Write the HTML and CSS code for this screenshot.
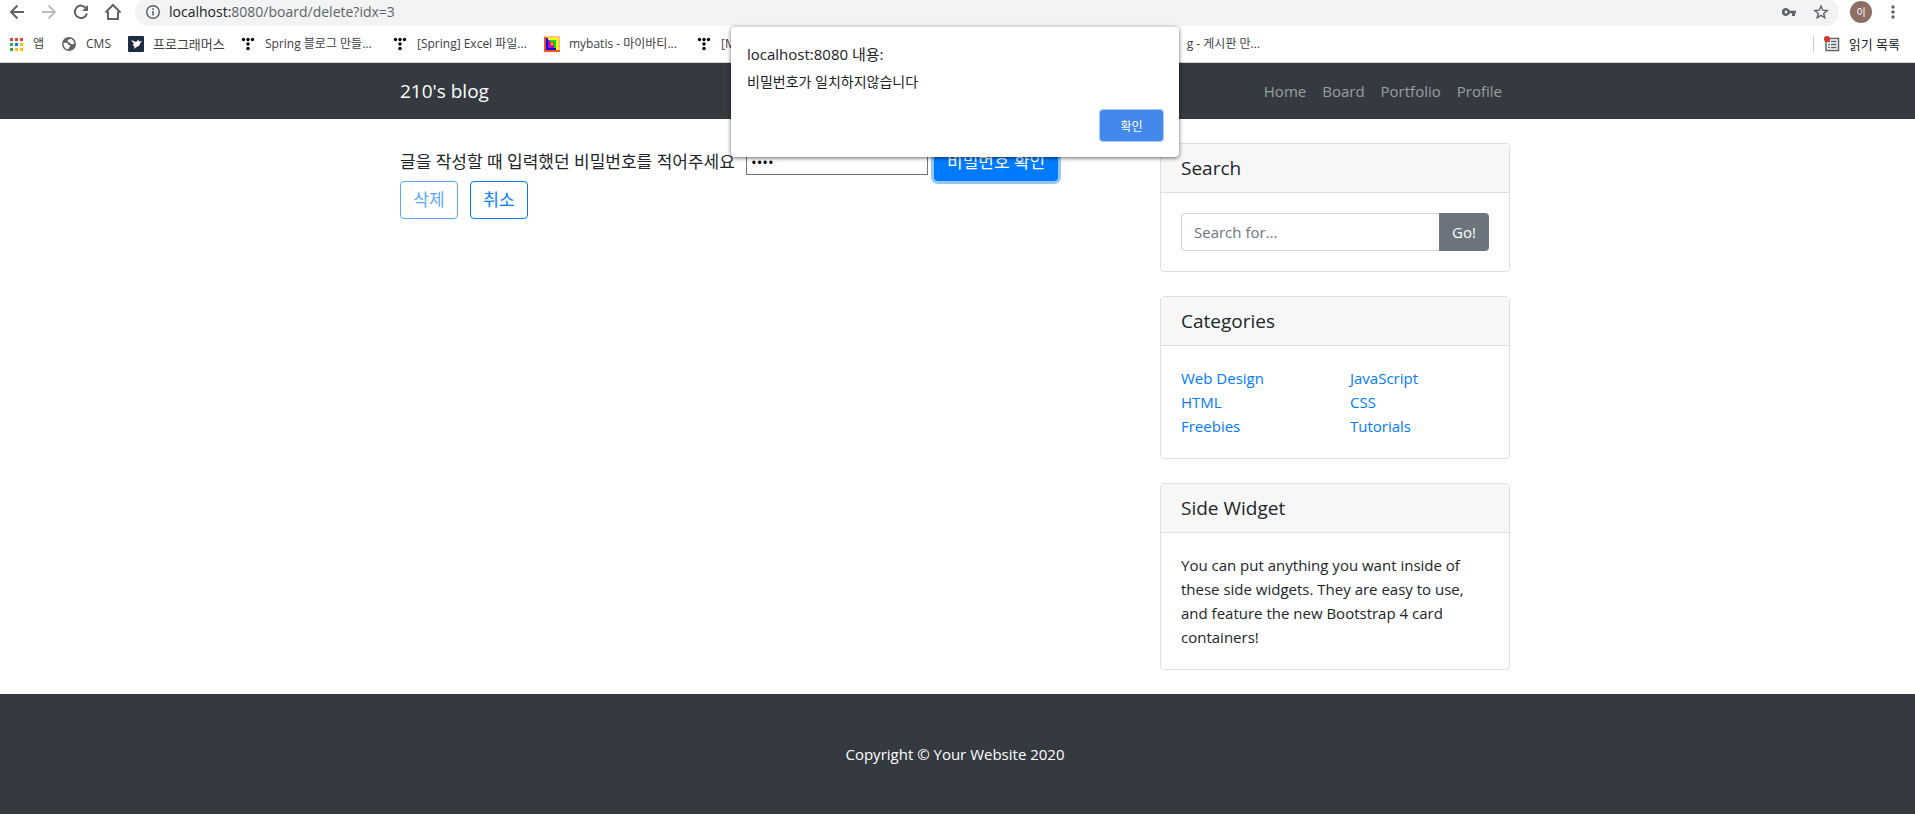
FILE: index.html
```html
<!DOCTYPE html>
<html lang="ko">
<head>
    <meta charset="UTF-8">
    <meta name="viewport" content="width=device-width, initial-scale=1.0">
    <title>210's blog</title>
    <link rel="stylesheet" href="styles.css">
</head>
<body>
    <!-- Browser toolbar -->
    <div class="toolbar">
        <button type="button" class="tool-btn" aria-label="Back">
            <svg width="16" height="16" viewBox="0 0 16 16"><path d="M15 8H2.5M8.5 1.5L2 8l6.5 6.5" fill="none" stroke="#5f6368" stroke-width="2"/></svg>
        </button>
        <button type="button" class="tool-btn" aria-label="Forward">
            <svg width="16" height="16" viewBox="0 0 16 16"><path d="M1 8h12.5M7.500 1.500L14 8l-6.500 6.500" fill="none" stroke="#babcbe" stroke-width="2"/></svg>
        </button>
        <button type="button" class="tool-btn" aria-label="Reload">
            <svg width="16" height="16" viewBox="0 0 16 16"><path d="M13.200 4.400A6.200 6.200 0 1 0 14 9.500" fill="none" stroke="#5f6368" stroke-width="2"/><path d="M15 1v6H9z" fill="#5f6368"/></svg>
        </button>
        <button type="button" class="tool-btn" aria-label="Home">
            <svg width="18" height="18" viewBox="0 0 18 18"><path d="M1.500 9.500L9 2l7.500 7.500M4 8.500V16h10V8.500" fill="none" stroke="#5f6368" stroke-width="2"/></svg>
        </button>
        <div class="omnibox">
            <svg width="16" height="16" viewBox="0 0 16 16"><circle cx="8" cy="8" r="6.300" fill="none" stroke="#5f6368" stroke-width="1.500"/><path d="M8 7v4.500M8 4.300v1.700" stroke="#5f6368" stroke-width="1.600"/></svg>
            <span class="url">localhost:<span class="path">8080/board/delete?idx=3</span></span>
            <svg class="key" width="16" height="16" viewBox="0 0 16 16"><path d="M5 4a4 4 0 1 0 3.700 5.300H11V12h3V9.300h1V6.700H8.700A4 4 0 0 0 5 4zm0 2.600a1.400 1.400 0 1 1 0 2.800 1.400 1.400 0 0 1 0-2.800z" fill="#5f6368"/></svg>
            <svg width="16" height="16" viewBox="0 0 16 16"><path d="M8 2l1.700 4.200 4.500.3-3.500 2.900 1.100 4.400L8 11.400l-3.800 2.400 1.100-4.400-3.500-2.900 4.500-.3z" fill="none" stroke="#5f6368" stroke-width="1.400"/></svg>
        </div>
        <span class="avatar">이</span>
        <button type="button" class="tool-btn" aria-label="Menu">
            <svg width="16" height="16" viewBox="0 0 16 16" fill="#5f6368"><circle cx="8" cy="3" r="1.700"/><circle cx="8" cy="8" r="1.700"/><circle cx="8" cy="13" r="1.700"/></svg>
        </button>
    </div>

    <!-- Bookmarks -->
    <div class="bookmarks">
        <a href="#" class="bookmark">
            <svg width="16" height="16" viewBox="0 0 16 16"><path d="M2 2h3v3H2zM7 2h3v3H7zM12 2h3v3h-3z" fill="#ea4335"/><path d="M2 7h3v3H2zM2 12h3v3H2z" fill="#34a853"/><path d="M7 7h3v3H7z" fill="#1a73e8"/><path d="M12 7h3v3h-3zM7 12h3v3H7zM12 12h3v3h-3z" fill="#fbbc04"/></svg>
            <span>앱</span>
        </a>
        <a href="#" class="bookmark">
            <svg width="16" height="16" viewBox="0 0 16 16"><circle cx="8" cy="8" r="7" fill="#5f6368"/><path d="M2.500 7c1.500-.5 3-.5 4 .3s.3 1.400 1.500 1.700 1.500 1.200.5 2.200-.8 1.500-1.500 2.300C4.500 13 2.500 10.500 2.500 7zM9 2.700C8 4 6.500 3.500 6.500 5s2 1 2.700 2.200 2.300 1.300 4.200.6C13.300 5.500 11.500 3 9 2.700z" fill="#fff"/></svg>
            <span>CMS</span>
        </a>
        <a href="#" class="bookmark bookmark-programmers">
            <svg width="16" height="16" viewBox="0 0 16 16"><rect width="16" height="16" rx="1" fill="#1e2a3e"/><path d="M3 4l5 2 2.500-2.500L11 5.500l3-.5-2 2.500c0 2-1.500 3-3.500 3.500L6 13l.5-2.500L4.500 9l1.500-1z" fill="#fff"/></svg>
            <span>프로그래머스</span>
        </a>
        <a href="#" class="bookmark bookmark-wide">
            <svg width="16" height="16" viewBox="0 0 16 16"><use href="#tistory"/></svg>
            <span>Spring 블로그 만들...</span>
        </a>
        <a href="#" class="bookmark bookmark-wide">
            <svg width="16" height="16" viewBox="0 0 16 16"><use href="#tistory"/></svg>
            <span>[Spring] Excel 파일...</span>
        </a>
        <a href="#" class="bookmark bookmark-wide">
            <svg width="16" height="16" viewBox="0 0 16 16"><path d="M0 0h16v16H0z" fill="#ffc66d"/><path d="M0 1h2v13h14v2H0z" fill="#f4511e"/><path d="M2 2h12v12H2z" fill="#ff0"/><path d="M2 2h2v10h8v2H2z" fill="#00f"/><path d="M4 4h8v8H4z" fill="#0d3"/><path d="M4 4h2v6h4v2H4z" fill="#b0c"/><path d="M6 6h4v4H6z" fill="#e32"/><path d="M7 7h2v2H7z" fill="#dd0"/></svg>
            <span>mybatis - 마이바티...</span>
        </a>
        <a href="#" class="bookmark">
            <svg width="16" height="16" viewBox="0 0 16 16"><g id="tistory"><circle cx="3.500" cy="3.500" r="1.700"/><circle cx="8" cy="3.500" r="1.700"/><circle cx="12.500" cy="3.500" r="1.700"/><circle cx="8" cy="8" r="1.700"/><circle cx="8" cy="12.500" r="1.700"/></g></svg>
            <span>[M</span>
        </a>
        <a href="#" class="bookmark bookmark-last">g - 게시판 만...</a>
        <a href="#" class="bookmark reading-list">
            <svg width="16" height="16" viewBox="0 0 16 16"><path d="M2 2.500h12.500v12H2z" fill="none" stroke="#5f6368" stroke-width="1.500"/><path d="M4 5.500h2M4 8.500h2M4 11.500h2M7 5.500h5.500M7 8.500h5.500M7 11.500h5.500" stroke="#5f6368" stroke-width="1.500"/><circle cx="3" cy="3" r="3" fill="#d93025"/></svg>
            <span>읽기 목록</span>
        </a>
    </div>

    <!-- Navigation -->
    <nav class="navbar">
        <div class="container navbar-inner">
            <a class="navbar-brand" href="#">210's blog</a>
            <ul class="navbar-nav">
                <li><a href="#">Home</a></li>
                <li><a href="#">Board</a></li>
                <li><a href="#">Portfolio</a></li>
                <li><a href="#">Profile</a></li>
            </ul>
        </div>
    </nav>

    <!-- Page Content -->
    <main class="page">
        <div class="container row">
            <form class="delete-form">
                <div class="password-row">
                    <label for="password">글을 작성할 때 입력했던 비밀번호를 적어주세요</label>
                    <input type="password" id="password" value="1234">
                    <button type="button" class="btn btn-primary">비밀번호 확인</button>
                </div>
                <div class="action-row">
                    <button type="submit" class="btn btn-outline" disabled>삭제</button>
                    <button type="button" class="btn btn-outline">취소</button>
                </div>
            </form>

            <aside class="sidebar">
                <div class="card">
                    <h5 class="card-header">Search</h5>
                    <div class="card-body input-group">
                        <input type="text" placeholder="Search for..." aria-label="Search for">
                        <button type="button" class="btn btn-secondary">Go!</button>
                    </div>
                </div>

                <div class="card">
                    <h5 class="card-header">Categories</h5>
                    <div class="card-body categories">
                        <ul>
                            <li><a href="#">Web Design</a></li>
                            <li><a href="#">HTML</a></li>
                            <li><a href="#">Freebies</a></li>
                        </ul>
                        <ul>
                            <li><a href="#">JavaScript</a></li>
                            <li><a href="#">CSS</a></li>
                            <li><a href="#">Tutorials</a></li>
                        </ul>
                    </div>
                </div>

                <div class="card">
                    <h5 class="card-header">Side Widget</h5>
                    <div class="card-body">
                        You can put anything you want inside of these side widgets. They are easy to use, and feature the new Bootstrap 4 card containers!
                    </div>
                </div>
            </aside>
        </div>
    </main>

    <!-- Footer -->
    <footer class="footer">
        <p>Copyright &copy; Your Website 2020</p>
    </footer>

    <!-- Alert -->
    <div class="alert" role="alertdialog" aria-labelledby="alert-title" aria-describedby="alert-text">
        <div class="alert-title" id="alert-title">localhost:8080 내용:</div>
        <div class="alert-text" id="alert-text">비밀번호가 일치하지않습니다</div>
        <button type="button" class="alert-ok">확인</button>
    </div>
</body>
</html>
```
FILE: styles.css
```css
* {
    box-sizing: border-box;
}

body {
    margin: 0;
    font-family: 'Open Sans', 'Noto Sans CJK KR', sans-serif;
    font-size: 15px;
    line-height: 24px;
    color: #212529;
    background-color: #fff;
}

a {
    color: #007bff;
    text-decoration: none;
}

ul {
    list-style: none;
    margin: 0;
    padding: 0;
}

button,
input {
    font-family: inherit;
    font-size: inherit;
}

svg {
    display: block;
    flex-shrink: 0;
}

/* browser toolbar */
.toolbar {
    display: flex;
    align-items: center;
    height: 28px;
    margin-top: -2px;
    padding: 0 6px 0 1px;
}

.tool-btn {
    display: flex;
    align-items: center;
    justify-content: center;
    width: 32px;
    height: 28px;
    padding: 0;
    border: none;
    background: none;
}

.omnibox {
    flex: 1;
    display: flex;
    align-items: center;
    gap: 8px;
    height: 28px;
    margin-left: 6px;
    padding: 0 10px;
    border-radius: 14px;
    background-color: #f1f3f4;
    font-size: 14px;
}

.url {
    color: #202124;
}

.path {
    color: #5f6368;
}

.key {
    margin-left: auto;
    margin-right: 8px;
}

.avatar {
    width: 22px;
    height: 22px;
    margin: 0 5px 0 11px;
    border-radius: 50%;
    background-color: #8d6e63;
    color: #fff;
    font-size: 10px;
    line-height: 22px;
    text-align: center;
}

.bookmarks {
    display: flex;
    align-items: center;
    height: 37px;
    padding: 0 15px 0 8px;
    border-bottom: 1px solid #cfd4d9;
    font-size: 12px;
    white-space: nowrap;
}

.bookmark {
    display: flex;
    align-items: center;
    gap: 9px;
    margin-right: 17px;
    color: #3c4043;
}

.bookmark-programmers {
    width: 95px;
    font-size: 13px;
}

.bookmark-wide {
    width: 135px;
}

.bookmark-last {
    margin-left: 434px;
}

.reading-list {
    height: 16px;
    margin-left: auto;
    margin-right: 0;
    padding-left: 10px;
    border-left: 1px solid #c8cace;
    color: #202124;
    font-size: 13px;
}

.navbar,
.page,
.footer {
    padding-right: 5px;
}

.container {
    max-width: 1140px;
    margin: 0 auto;
    padding: 0 15px;
}

.navbar {
    background-color: #343a40;
}

.navbar-inner {
    display: flex;
    align-items: center;
    justify-content: space-between;
    height: 56px;
}

.navbar-brand {
    color: #fff;
    font-size: 19px;
}

.navbar-nav {
    display: flex;
}

.navbar-nav a {
    padding: 8px;
    color: rgba(255, 255, 255, 0.5);
}

/* content */
.row {
    display: flex;
    justify-content: space-between;
    gap: 30px;
    padding-top: 24px;
}

.delete-form {
    flex: 1;
}

.password-row {
    display: flex;
    align-items: center;
    gap: 4px;
    height: 38px;
}

.password-row label {
    min-width: 342px;
    font-size: 17px;
    line-height: 22px;
    white-space: nowrap;
}

.password-row input {
    width: 182px;
    height: 26px;
    padding: 1px 4px;
    border: 1px solid #767676;
    background-color: #fff;
}

.action-row {
    display: flex;
    gap: 12px;
}

.btn {
    height: 38px;
    padding: 0 12px;
    border: 1px solid transparent;
    border-radius: 4px;
    line-height: 24px;
    white-space: nowrap;
}

.btn-primary {
    margin-left: 2px;
    background-color: #007bff;
    color: #fff;
    font-size: 17px;
    box-shadow: 0 0 0 3px rgba(38, 143, 255, 0.5);
}

.btn-outline {
    width: 58px;
    border-color: #007bff;
    background-color: transparent;
    color: #007bff;
    font-size: 17px;
}

.btn-outline:disabled {
    opacity: 0.65;
}

.btn-secondary {
    border-radius: 0 4px 4px 0;
    background-color: #6c757d;
    color: #fff;
}

.sidebar {
    width: 350px;
}

.card {
    margin-bottom: 24px;
    border: 1px solid #dfdfdf;
    border-radius: 4px;
}

.card-header {
    margin: 0;
    padding: 12px 20px;
    border-bottom: 1px solid #dfdfdf;
    background-color: #f7f7f7;
    font-size: 19px;
    font-weight: 500;
    line-height: 24px;
}

.card-body {
    padding: 20px;
}

.input-group {
    display: flex;
}

.input-group input {
    flex: 1;
    min-width: 0;
    height: 38px;
    padding: 6px 12px;
    border: 1px solid #ced4da;
    border-right: none;
    border-radius: 4px 0 0 4px;
}

.input-group input::placeholder {
    color: #6c757d;
}

.categories {
    display: grid;
    grid-template-columns: 1fr 1fr;
    gap: 30px;
}

.footer {
    padding-top: 48px;
    padding-bottom: 48px;
    background-color: #343a40;
    color: #fff;
    text-align: center;
}

.footer p {
    margin: 0;
}

/* alert box over the page */
.alert {
    position: absolute;
    top: 27px;
    left: 0;
    right: 5px;
    display: flex;
    flex-direction: column;
    width: 448px;
    height: 130px;
    margin: 0 auto;
    padding: 15px 15px 15px 16px;
    border-radius: 4px;
    background-color: #fff;
    box-shadow: 0 1px 4px rgba(0, 0, 0, 0.6);
    color: #202124;
}

.alert-title {
    font-size: 15px;
}

.alert-text {
    margin-top: 4px;
    font-size: 14px;
}

.alert-ok {
    align-self: flex-end;
    width: 65px;
    height: 33px;
    margin-top: auto;
    border: 1px solid #a8cbf9;
    border-radius: 4px;
    background-color: #4289eb;
    color: #fff;
    font-size: 12px;
}
```
